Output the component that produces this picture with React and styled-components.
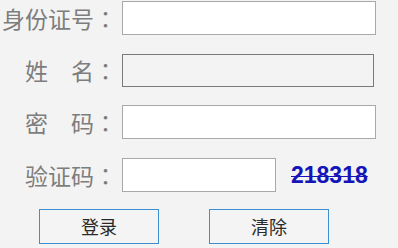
import React from "react";
import styled, { createGlobalStyle } from "styled-components";

const Global = createGlobalStyle`
  html, body { margin: 0; padding: 0; background: #f3f3f3; }
  body { font-family: "Noto Sans CJK SC", "Microsoft YaHei", sans-serif; }
`;

const Page = styled.div`
  width: 398px;
  height: 248px;
  box-sizing: border-box;
  padding-top: 1px;
  display: flex;
  flex-direction: column;
  overflow: hidden;
`;

const Form = styled.div`
  display: flex;
  flex-direction: column;
  gap: 18px;
`;

const Row = styled.div`
  display: flex;
  align-items: center;
  height: 34px;
  margin-top: ${(p) => p.$nudge || 0}px;
`;

const Label = styled.label`
  width: 117px;
  margin-right: 5px;
  text-align: right;
  white-space: nowrap;
  font-size: 23px;
  line-height: 34px;
  color: #7d7d7d;
  font-family: "Noto Sans CJK SC", "Microsoft YaHei", sans-serif;
`;

const Colon = styled.span`
  font-family: "Noto Sans CJK TC", "Noto Sans CJK SC", sans-serif;
`;

const Input = styled.input`
  box-sizing: border-box;
  width: ${(p) => p.$w}px;
  height: 34px;
  margin: 0;
  padding: 0 4px;
  border: 1px solid #a9a9a9;
  background: #ffffff;
  outline: none;
  font-size: 16px;

  &:disabled {
    width: ${(p) => p.$w - 2}px;
    height: 33px;
    border-color: #7a7a7a;
    background: #f3f3f3;
  }
`;

const Captcha = styled.span`
  margin-left: 15px;
  font-family: "Liberation Sans", Arial, sans-serif;
  font-weight: bold;
  font-size: 23px;
  color: #1414b8;
  text-decoration: line-through;
  text-decoration-thickness: 1px;
`;

const Buttons = styled.div`
  display: flex;
  gap: 50px;
  padding-left: 39px;
  margin-top: 17px;
`;

const Button = styled.button`
  box-sizing: border-box;
  width: 120px;
  height: 35px;
  margin: 0;
  padding: 0;
  border: 1px solid #3d8fd1;
  background: #f4f4f4;
  color: #2a2a2a;
  font-family: "Noto Sans CJK SC", "Microsoft YaHei", sans-serif;
  font-size: 18px;
  line-height: 33px;
  cursor: pointer;
`;

export default function App() {
  return (
    <>
      <Global />
      <Page>
        <Form>
          <Row>
            <Label>身份证号<Colon>：</Colon></Label>
            <Input $w={254} />
          </Row>
          <Row>
            <Label>姓　名<Colon>：</Colon></Label>
            <Input $w={254} disabled />
          </Row>
          <Row>
            <Label>密　码<Colon>：</Colon></Label>
            <Input $w={254} type="password" />
          </Row>
          <Row $nudge={1}>
            <Label>验证码<Colon>：</Colon></Label>
            <Input $w={154} />
            <Captcha>218318</Captcha>
          </Row>
        </Form>
        <Buttons>
          <Button>登录</Button>
          <Button>清除</Button>
        </Buttons>
      </Page>
    </>
  );
}
